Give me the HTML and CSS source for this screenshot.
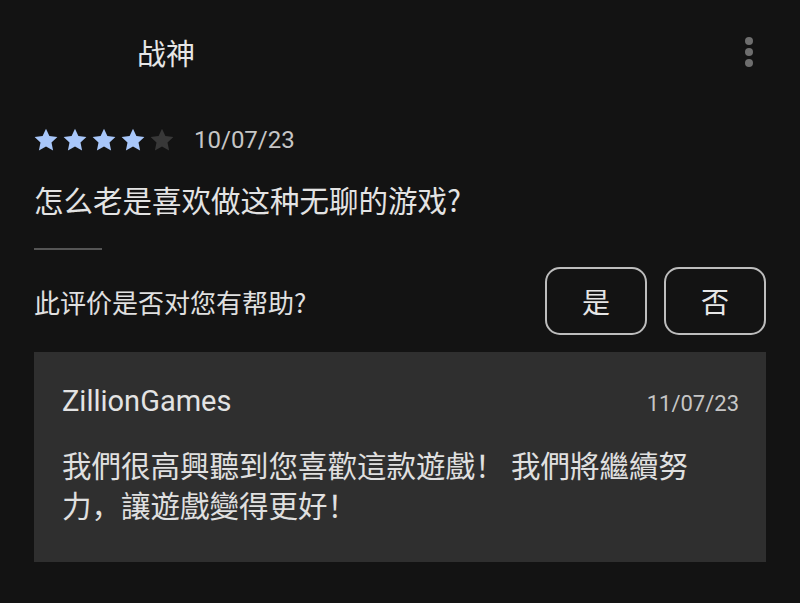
FILE: index.html
```html
<!DOCTYPE html>
<html lang="zh">
<head>
<meta charset="utf-8">
<link rel="stylesheet" href="styles.css">
</head>
<body>
<div class="page">
  <header class="header">
    <div class="title">战神</div>
    <div class="more"><span></span><span></span><span></span></div>
  </header>
  <div class="rating-row">
    <div class="stars">
      <svg class="star on" viewBox="0 0 24 24"><path d="M12 .8l3.4 7.3 8 .9-5.9 5.5 1.6 7.9L12 18.4l-7.1 4 1.6-7.9L.6 9l8-.9z"/></svg>
      <svg class="star on" viewBox="0 0 24 24"><path d="M12 .8l3.4 7.3 8 .9-5.9 5.5 1.6 7.9L12 18.4l-7.1 4 1.6-7.9L.6 9l8-.9z"/></svg>
      <svg class="star on" viewBox="0 0 24 24"><path d="M12 .8l3.4 7.3 8 .9-5.9 5.5 1.6 7.9L12 18.4l-7.1 4 1.6-7.9L.6 9l8-.9z"/></svg>
      <svg class="star on" viewBox="0 0 24 24"><path d="M12 .8l3.4 7.3 8 .9-5.9 5.5 1.6 7.9L12 18.4l-7.1 4 1.6-7.9L.6 9l8-.9z"/></svg>
      <svg class="star off" viewBox="0 0 24 24"><path d="M12 .8l3.4 7.3 8 .9-5.9 5.5 1.6 7.9L12 18.4l-7.1 4 1.6-7.9L.6 9l8-.9z"/></svg>
    </div>
    <span class="date">10/07/23</span>
  </div>
  <p class="review">怎么老是喜欢做这种无聊的游戏?</p>
  <div class="divider"></div>
  <div class="helpful">
    <span class="helpful-q">此评价是否对您有帮助?</span>
    <div class="btns">
      <button class="btn">是</button>
      <button class="btn">否</button>
    </div>
  </div>
  <div class="reply">
    <div class="reply-head">
      <span class="dev">ZillionGames</span>
      <span class="reply-date">11/07/23</span>
    </div>
    <p class="reply-text">我們很高興聽到您喜歡這款遊戲！ 我們將繼續努力，讓遊戲變得更好！</p>
  </div>
</div>
</body>
</html>
```
FILE: styles.css
```css
* { box-sizing: border-box; }
html, body { margin: 0; padding: 0; }
body {
  background: #131313;
  width: 800px;
  height: 603px;
  overflow: hidden;
  color: #e3e3e3;
  font-family: "Noto Sans CJK SC", "Noto Sans", sans-serif;
}
.page {
  padding: 0 34px;
}
.header {
  display: flex;
  align-items: center;
  justify-content: space-between;
  height: 104px;
  padding-left: 103px;
}
.title {
  font-size: 29px;
  line-height: 1;
  color: #e6e6e6;
}
.more {
  display: flex;
  flex-direction: column;
  gap: 3px;
  margin-right: 13px;
}
.more span {
  width: 8px;
  height: 8px;
  border-radius: 50%;
  background: #6e6e6e;
}
.rating-row {
  display: flex;
  align-items: center;
  height: 40px;
  margin-top: 16px;
}
.stars {
  display: flex;
  gap: 5px;
}
.star {
  width: 24px;
  height: 24px;
}
.star.on path { fill: #a8c7fa; }
.star.off path { fill: #383838; }
.date {
  margin-left: 20px;
  font-family: Roboto, "Noto Sans", sans-serif;
  font-size: 24px;
  color: #c6c6c6;
}
.review {
  margin: 19px 0 0;
  font-size: 29.5px;
  line-height: 40px;
  color: #e3e3e3;
}
.divider {
  width: 68px;
  height: 2px;
  background: #555;
  margin-top: 29px;
}
.helpful {
  display: flex;
  align-items: center;
  justify-content: space-between;
  margin-top: 17px;
}
.helpful-q {
  font-size: 26px;
  color: #e0e0e0;
}
.btns {
  display: flex;
  gap: 17px;
}
.btn {
  width: 102px;
  height: 68px;
  border: 2px solid #bdbdbd;
  border-radius: 15px;
  background: transparent;
  color: #e6e6e6;
  font-family: "Noto Sans CJK SC", sans-serif;
  font-size: 28px;
  padding: 0;
}
.reply {
  margin-top: 17px;
  background: #2f2f2f;
  padding: 31px 27px 0 28px;
  height: 210px;
}
.reply-head {
  display: flex;
  justify-content: space-between;
  align-items: baseline;
  height: 36px;
  line-height: 36px;
}
.dev {
  font-family: Roboto, "Noto Sans", sans-serif;
  font-size: 29px;
  color: #e3e3e3;
}
.reply-date {
  font-family: Roboto, "Noto Sans", sans-serif;
  font-size: 22px;
  color: #c6c6c6;
}
.reply-text {
  margin: 25px 0 0;
  width: 660px;
  font-family: "Noto Sans CJK TC", "Noto Sans CJK SC", sans-serif;
  font-size: 29.5px;
  line-height: 40px;
  color: #e0e0e0;
}
```
